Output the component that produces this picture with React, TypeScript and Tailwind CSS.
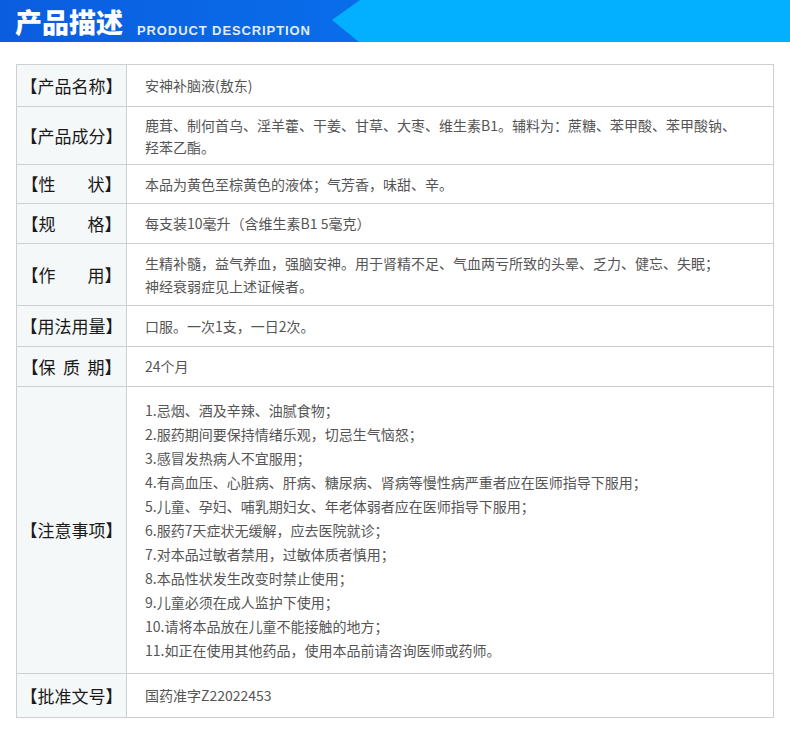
import React from 'react'

const cjk = { fontFamily: '"Noto Sans CJK SC", "Noto Sans", sans-serif' }

type Row = { label: React.ReactNode; lines: string[]; h: string; lh: string }

const rows: Row[] = [
  { label: '【产品名称】', lines: ['安神补脑液(敖东)'], h: 'h-[41px]', lh: 'leading-[23px]' },
  {
    label: '【产品成分】',
    lines: ['鹿茸、制何首乌、淫羊藿、干姜、甘草、大枣、维生素B1。辅料为：蔗糖、苯甲酸、苯甲酸钠、', '羟苯乙酯。'],
    h: 'h-[58px]',
    lh: 'leading-[22px]',
  },
  {
    label: (
      <span className="flex w-[100px] justify-between">
        <span>【性</span>
        <span>状】</span>
      </span>
    ),
    lines: ['本品为黄色至棕黄色的液体；气芳香，味甜、辛。'],
    h: 'h-[39px]',
    lh: 'leading-[23px]',
  },
  {
    label: (
      <span className="flex w-[100px] justify-between">
        <span>【规</span>
        <span>格】</span>
      </span>
    ),
    lines: ['每支装10毫升（含维生素B1 5毫克）'],
    h: 'h-[40px]',
    lh: 'leading-[23px]',
  },
  {
    label: (
      <span className="flex w-[100px] justify-between">
        <span>【作</span>
        <span>用】</span>
      </span>
    ),
    lines: ['生精补髓，益气养血，强脑安神。用于肾精不足、气血两亏所致的头晕、乏力、健忘、失眠；', '神经衰弱症见上述证候者。'],
    h: 'h-[62px]',
    lh: 'leading-[23px]',
  },
  { label: '【用法用量】', lines: ['口服。一次1支，一日2次。'], h: 'h-[41px]', lh: 'leading-[23px]' },
  {
    label: (
      <span className="flex w-[100px] justify-between">
        <span>【保</span>
        <span>质</span>
        <span>期】</span>
      </span>
    ),
    lines: ['24个月'],
    h: 'h-[40px]',
    lh: 'leading-[23px]',
  },
  {
    label: '【注意事项】',
    lines: [
      '1.忌烟、酒及辛辣、油腻食物；',
      '2.服药期间要保持情绪乐观，切忌生气恼怒；',
      '3.感冒发热病人不宜服用；',
      '4.有高血压、心脏病、肝病、糖尿病、肾病等慢性病严重者应在医师指导下服用；',
      '5.儿童、孕妇、哺乳期妇女、年老体弱者应在医师指导下服用；',
      '6.服药7天症状无缓解，应去医院就诊；',
      '7.对本品过敏者禁用，过敏体质者慎用；',
      '8.本品性状发生改变时禁止使用；',
      '9.儿童必须在成人监护下使用；',
      '10.请将本品放在儿童不能接触的地方；',
      '11.如正在使用其他药品，使用本品前请咨询医师或药师。',
    ],
    h: 'h-[287px]',
    lh: 'leading-[24px]',
  },
  { label: '【批准文号】', lines: ['国药准字Z22022453'], h: 'h-[44px]', lh: 'leading-[23px]' },
]

const App = () => {
  return (
    <div className="w-[790px] min-h-[735px] bg-white" style={cjk}>
      <div className="relative h-[42px] w-full overflow-hidden bg-gradient-to-r from-[#0b5ddf] to-[#0a80f8]">
        <svg className="absolute right-0 top-0" width="458" height="42" viewBox="0 0 458 42">
          <polygon points="28,0 458,0 458,42 27,42 0,20" fill="#02b0ff" />
        </svg>
        <div className="relative flex h-full items-center pl-[15px]">
          <span className="text-[27px] font-black leading-none text-white">产品描述</span>
          <span
            className="relative top-[9px] ml-[14px] text-[13px] font-bold leading-none tracking-[0.9px] text-[#e3ecf8]"
            style={{ fontFamily: '"Liberation Sans", Arial, sans-serif' }}
          >
            PRODUCT DESCRIPTION
          </span>
        </div>
      </div>

      <div className="ml-[16px] mt-[22px] w-[758px] border border-[#cfcfcf]">
        {rows.map((r, i) => (
          <div key={i} className={`flex ${r.h} ${i > 0 ? 'border-t border-[#cfcfcf]' : ''}`}>
            <div className="flex w-[110px] shrink-0 items-center justify-center border-r border-[#cfcfcf] bg-[#f5f8f8] text-[17px] text-[#1a1a1a]">
              {r.label}
            </div>
            <div className={`flex flex-col justify-center pl-[18px] text-[14px] text-[#555] ${r.lh}`}>
              {r.lines.map((l, j) => (
                <div key={j}>{l}</div>
              ))}
            </div>
          </div>
        ))}
      </div>
    </div>
  )
}

export default App
